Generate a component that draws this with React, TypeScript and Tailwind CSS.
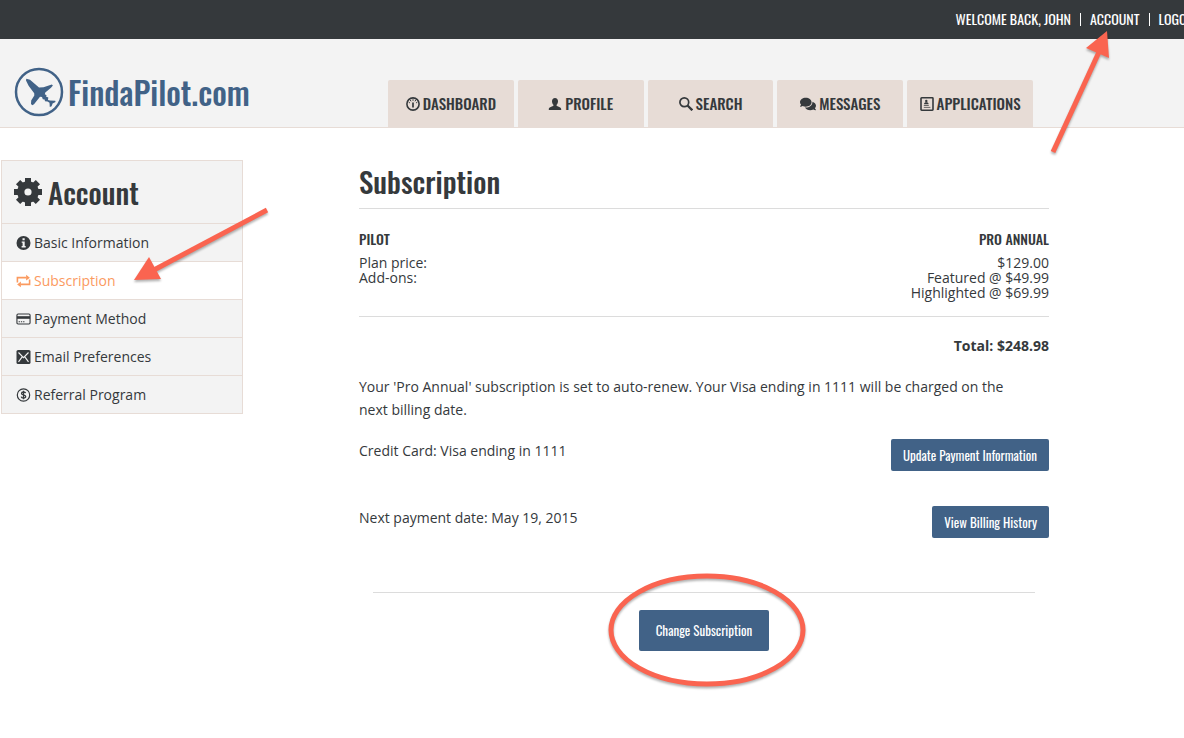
import { ReactNode } from "react";
import { FaComments } from "react-icons/fa";

type IconProps = { className?: string };

const GaugeIcon = ({ className }: IconProps) => (
  <svg viewBox="0 0 14 14" className={className} fill="none" stroke="currentColor">
    <circle cx="7" cy="7" r="6.1" strokeWidth="1.6" />
    <path d="M7 5.5V10.6" strokeWidth="1.7" />
    <path d="M7 2.2v1.6M4.3 3l.7 1.3M9.7 3L9 4.3M2.7 5.2l1.2.7M11.3 5.2l-1.2.7" strokeWidth="1" />
  </svg>
);

const PersonIcon = ({ className }: IconProps) => (
  <svg viewBox="0 0 14 14" className={className} fill="currentColor">
    <path d="M7 1c1.9 0 3 1.3 3 3.2 0 1.600-.6 2.800-1.400 3.500v1.100c.5.9 4.600 1 4.600 3.400V13H.8v-.8c0-2.400 4.100-2.500 4.600-3.400V7.700C4.600 7 4 5.800 4 4.200 4 2.300 5.100 1 7 1z" />
  </svg>
);

const SearchIcon = ({ className }: IconProps) => (
  <svg viewBox="0 0 14 14" className={className} fill="none" stroke="currentColor">
    <circle cx="5.3" cy="5.3" r="4.4" strokeWidth="1.7" />
    <path d="M8.5 8.5l4.8 4.8" strokeWidth="2.3" />
  </svg>
);

const ApplicationIcon = ({ className }: IconProps) => (
  <svg viewBox="0 0 14 14" className={className}>
    <rect x="1" y="0.8" width="12" height="12.4" rx="0.6" fill="none" stroke="currentColor" strokeWidth="1.6" />
    <circle cx="6.3" cy="4" r="1.2" fill="currentColor" />
    <path d="M4 7.2c0-1.600 1-2 2.300-2s2.300.4 2.300 2z" fill="currentColor" />
    <path d="M3.800 8.500h5M3.800 10.400h6.600" stroke="currentColor" opacity="0.7" />
  </svg>
);

const GearIcon = ({ className }: IconProps) => (
  <svg viewBox="0 0 28 28" className={className} fill="none" stroke="currentColor">
    <circle cx="14" cy="14" r="7.2" strokeWidth="7.2" />
    <path
      d="M14 5V0M14 28v-5M5 14H0M28 14h-5M7.700 7.700L4.100 4.100M20.300 20.300l3.600 3.600M7.700 20.300l-3.600 3.600M20.300 7.700l3.600-3.600"
      strokeWidth="6"
    />
  </svg>
);

const InfoIcon = ({ className }: IconProps) => (
  <svg viewBox="0 0 14 14" className={className}>
    <circle cx="7" cy="7" r="7" fill="currentColor" />
    <path d="M6 2.200h2.200v2H6zM5.200 5.500h3v4.600h1v1.300H5.100v-1.300h1V6.800h-.9z" fill="#f3f3f3" />
  </svg>
);

const RepeatIcon = ({ className }: IconProps) => (
  <svg viewBox="0 0 16 14" className={className}>
    <path d="M1.500 8.500V3.400H11M14.500 5.500v5.100H5" fill="none" stroke="currentColor" strokeWidth="1.7" />
    <path d="M10.800 0.400l4 3-4 3zM5.200 7.600L1.200 10.600l4 3z" fill="currentColor" />
  </svg>
);

const CardIcon = ({ className }: IconProps) => (
  <svg viewBox="0 0 16 14" className={className}>
    <rect x="1" y="1.7" width="14" height="10.6" rx="1.2" fill="none" stroke="currentColor" strokeWidth="1.2" />
    <path d="M1 4h14v2.800H1z" fill="currentColor" />
    <path d="M2.800 9.900h1.400M5.200 9.900h1.400M7.600 9.900H9" stroke="currentColor" strokeWidth="1.2" />
  </svg>
);

const MailIcon = ({ className }: IconProps) => (
  <svg viewBox="0 0 14 14" className={className}>
    <rect width="14" height="14" rx="1.6" fill="currentColor" />
    <path d="M2 2.500l5 5.200 5-5.200M2 11.800l3.700-5M12 11.800l-3.700-5" fill="none" stroke="#f3f3f3" strokeWidth="1.1" />
  </svg>
);

const DollarIcon = ({ className }: IconProps) => (
  <svg viewBox="0 0 14 14" className={className} fill="none" stroke="currentColor">
    <circle cx="7" cy="7" r="6.2" strokeWidth="1.2" />
    <path
      d="M9.100 5.200C8.900 4.300 8 4 7 4s-2 .4-2 1.400C5 7.200 9.200 6.500 9.200 8.500 9.200 9.600 8.200 10 7 10s-2.100-.4-2.300-1.400M7 2.800v8.400"
      strokeWidth="1.3"
    />
  </svg>
);

const Logo = () => (
  <a href="#" className="flex items-center gap-1 text-[#416287]">
    <svg viewBox="0 0 50 50" className="size-[50px]">
      <circle cx="25" cy="25" r="23" fill="none" stroke="currentColor" strokeWidth="2.5" />
      <path
        d="M12.300 11.800L16 12.800 25 20.500 29.500 20.300 37.800 17.600 38.900 18.600 37 20.800 31.300 25.500 30.800 27.200 32.600 28.300 32 29.600 34.300 30.600 34 33 36 33.600 41.300 33.800 41.500 35 38.600 36.500 37.600 39.300 35.800 40 35.500 35.800 33.500 34.600 31 34.300 30.600 32.500 28.800 32.300 28 30 26 29.800 20 37.200 18.300 38.200 17 37 17.200 33.500 20.300 28.500 20.200 26.300 14.600 18.800 12 13.500z"
        fill="currentColor"
      />
    </svg>
    <span className="text-[32px] leading-none font-medium">FindaPilot.com</span>
  </a>
);

const tabs: { label: string; icon: ReactNode }[] = [
  { label: "Dashboard", icon: <GaugeIcon className="size-[14px]" /> },
  { label: "Profile", icon: <PersonIcon className="size-[14px]" /> },
  { label: "Search", icon: <SearchIcon className="size-[14px]" /> },
  { label: "Messages", icon: <FaComments className="size-[16px]" /> },
  { label: "Applications", icon: <ApplicationIcon className="size-[14px]" /> },
];

const menu = [
  { label: "Basic Information", Icon: InfoIcon },
  { label: "Subscription", Icon: RepeatIcon, active: true },
  { label: "Payment Method", Icon: CardIcon },
  { label: "Email Preferences", Icon: MailIcon },
  { label: "Referral Program", Icon: DollarIcon },
];

const condensed = "font-['Oswald','Roboto_Condensed','Liberation_Sans_Narrow',sans-serif]";
const button = "rounded-xs bg-[#416287] text-[13px] text-white";

const TopBar = () => (
  <div className={`${condensed} h-[39px] overflow-hidden bg-[#35393c] text-[14px] leading-[38px] text-white uppercase`}>
    <ul className="-mr-4 flex items-center justify-end whitespace-nowrap">
      <li>Welcome back, John</li>
      <li className="mx-[9px] h-[13px] w-px bg-white" />
      <li>
        <a href="#">Account</a>
      </li>
      <li className="mx-[9px] h-[13px] w-px bg-white" />
      <li>
        <a href="#">Logout</a>
      </li>
    </ul>
  </div>
);

const Header = () => (
  <header className={`${condensed} flex h-[89px] items-end border-b border-[#e7dcd6] bg-[#f3f3f3] pl-[14px]`}>
    <div className="w-[374px] shrink-0 pb-[10px]">
      <Logo />
    </div>
    <nav className="mr-[151px] flex flex-1 gap-1">
      {tabs.map((tab) => (
        <a
          key={tab.label}
          href="#"
          className="flex h-[47px] flex-1 basis-0 items-center justify-center gap-[3px] rounded-t-xs bg-[#e7dcd6] text-[15px] font-medium uppercase"
        >
          {tab.icon}
          {tab.label}
        </a>
      ))}
    </nav>
  </header>
);

const Sidebar = () => (
  <aside className="ml-px w-[242px] shrink-0 self-start border border-[#e7dcd6] bg-[#f3f3f3]">
    <h2 className={`${condensed} flex h-[62px] items-center gap-[6px] pl-3 text-[29px] font-medium`}>
      <GearIcon className="size-7" />
      Account
    </h2>
    <ul>
      {menu.map(({ label, Icon, active }) => (
        <li key={label} className="relative border-t border-[#e7dcd6]">
          <a
            href="#"
            className={
              active
                ? "flex h-[37px] items-center gap-[3px] bg-white pl-[14px] text-[#fb9a5f]"
                : "flex h-[37px] items-center gap-[3px] pl-[14px]"
            }
          >
            <Icon className="h-[14px] w-[15px]" />
            {label}
          </a>
          {active && (
            <svg
              viewBox="0 0 140 80"
              className="pointer-events-none absolute -top-[55px] left-[130px] h-20 w-[140px] text-[#fa6450] drop-shadow-[0_2px_1px_rgba(0,0,0,0.3)]"
            >
              <path d="M135 3L20 64" stroke="currentColor" strokeWidth="5" />
              <path d="M2 73L17 50L29 72z" fill="currentColor" />
            </svg>
          )}
        </li>
      ))}
    </ul>
  </aside>
);

const Subscription = () => (
  <main className="mr-[135px] ml-[116px] flex-1">
    <h1 className={`${condensed} h-[49px] border-b border-[#dcdcdc] text-[29px] leading-[42px] font-medium`}>
      Subscription
    </h1>

    <table className="mt-[18px] w-full leading-[15px]">
      <thead className={`${condensed} text-[14px] leading-6 uppercase`}>
        <tr>
          <th className="pb-1 text-left font-medium">Pilot</th>
          <th className="pb-1 text-right font-medium">Pro Annual</th>
        </tr>
      </thead>
      <tbody>
        <tr>
          <td>Plan price:</td>
          <td className="text-right">$129.00</td>
        </tr>
        <tr>
          <td className="align-top">Add-ons:</td>
          <td className="pb-4 text-right">
            Featured @ $49.99
            <br />
            Highlighted @ $69.99
          </td>
        </tr>
      </tbody>
    </table>

    <p className="border-t border-[#dcdcdc] pt-[17px] text-right leading-6 font-bold">Total: $248.98</p>

    <p className="mt-[17px] pr-5 leading-[23px]">
      Your 'Pro Annual' subscription is set to auto-renew. Your Visa ending in 1111 will be charged on the next billing
      date.
    </p>

    <div className="mt-[18px] flex items-start justify-between leading-6">
      <p>Credit Card: Visa ending in 1111</p>
      <button type="button" className={`${condensed} ${button} h-8 px-3`}>
        Update Payment Information
      </button>
    </div>
    <div className="mt-[35px] flex items-start justify-between leading-6">
      <p>Next payment date: May 19, 2015</p>
      <button type="button" className={`${condensed} ${button} h-8 px-3`}>
        View Billing History
      </button>
    </div>

    <div className="mx-[14px] mt-[54px] flex justify-center border-t border-[#dcdcdc] pt-[17px]">
      <div className="relative">
        <button type="button" className={`${condensed} ${button} h-[41px] w-[130px]`}>
          Change Subscription
        </button>
        <svg
          viewBox="0 0 200 116"
          className="pointer-events-none absolute -top-[38px] -left-8 h-[116px] w-[200px] max-w-none drop-shadow-[0_2px_1px_rgba(0,0,0,0.3)]"
        >
          <ellipse cx="100" cy="58" rx="96" ry="54" fill="none" stroke="#fa6450" strokeWidth="5" />
        </svg>
      </div>
    </div>
  </main>
);

export default function App() {
  return (
    <div className="relative min-h-screen overflow-x-hidden bg-white font-['Open_Sans',sans-serif] text-[14px] text-[#35393c]">
      <TopBar />
      <Header />
      <div className="flex pt-8 pb-10">
        <Sidebar />
        <Subscription />
      </div>
      <svg
        viewBox="0 0 70 130"
        className="pointer-events-none absolute top-[28px] right-[69px] h-[130px] w-[70px] text-[#fa6450] drop-shadow-[0_2px_1px_rgba(0,0,0,0.3)]"
      >
        <path d="M8 124L54 24" stroke="currentColor" strokeWidth="5" />
        <path d="M62 3L41 20L64 30z" fill="currentColor" />
      </svg>
    </div>
  );
}
